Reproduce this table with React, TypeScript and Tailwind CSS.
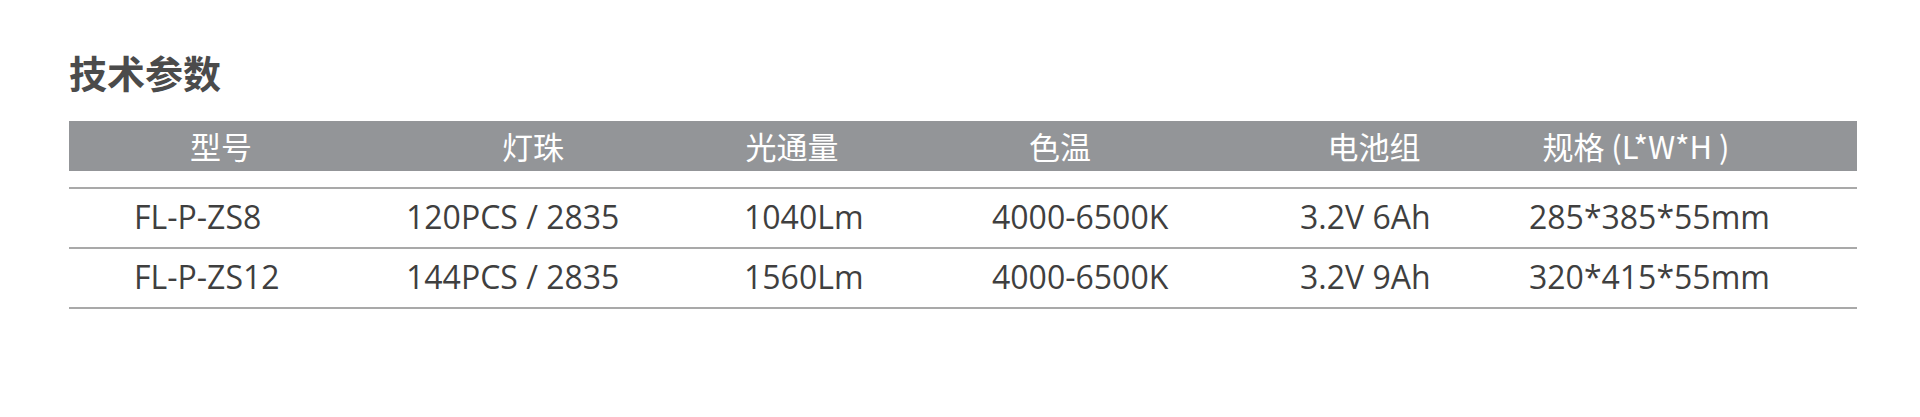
const headers = ['型号', '灯珠', '光通量', '色温', '电池组', '规格 (L*W*H )'];

const rows = [
  ['FL-P-ZS8', '120PCS / 2835', '1040Lm', '4000-6500K', '3.2V 6Ah', '285*385*55mm'],
  ['FL-P-ZS12', '144PCS / 2835', '1560Lm', '4000-6500K', '3.2V 9Ah', '320*415*55mm'],
];

// left padding of data cells, per column
const pads = ['pl-[65px]', 'pl-[33px]', 'pl-[51px]', 'pl-[101px]', 'pl-[71px]', 'pl-[10px]'];

const cols = 'grid grid-cols-[304px_320px_198px_338px_290px_234px_1fr]';

export default function App() {
  return (
    <div className="w-[1920px] h-[417px] bg-white pl-[69px] pr-[63px] pt-[46px]">
      {/* Title */}
      <h2 className="h-[75px] text-[38px] leading-[52px] font-bold text-[#4b4b4b] font-['Noto_Sans_CJK_SC',sans-serif]">
        技术参数
      </h2>

      {/* Header */}
      <div className={`${cols} h-[50px] items-center bg-[#939598] text-white text-[31px] font-['Noto_Sans_CJK_SC',sans-serif]`}>
        {headers.map(h => (
          <div key={h} className="text-center leading-[50px] whitespace-pre">{h}</div>
        ))}
        <div />
      </div>

      {/* Rows */}
      <div className="mt-[16px] border-t-2 border-[#a9a9a9]">
        {rows.map(r => (
          <div
            key={r[0]}
            className={`${cols} h-[60px] items-center border-b-2 border-[#a9a9a9] text-[32px] leading-[44px] text-[#3f3f3f] font-['Open_Sans',sans-serif]`}
          >
            {r.map((c, i) => (
              <div key={i} className={`${pads[i]} whitespace-nowrap pb-[2px]`}>{c}</div>
            ))}
            <div />
          </div>
        ))}
      </div>
    </div>
  );
}
